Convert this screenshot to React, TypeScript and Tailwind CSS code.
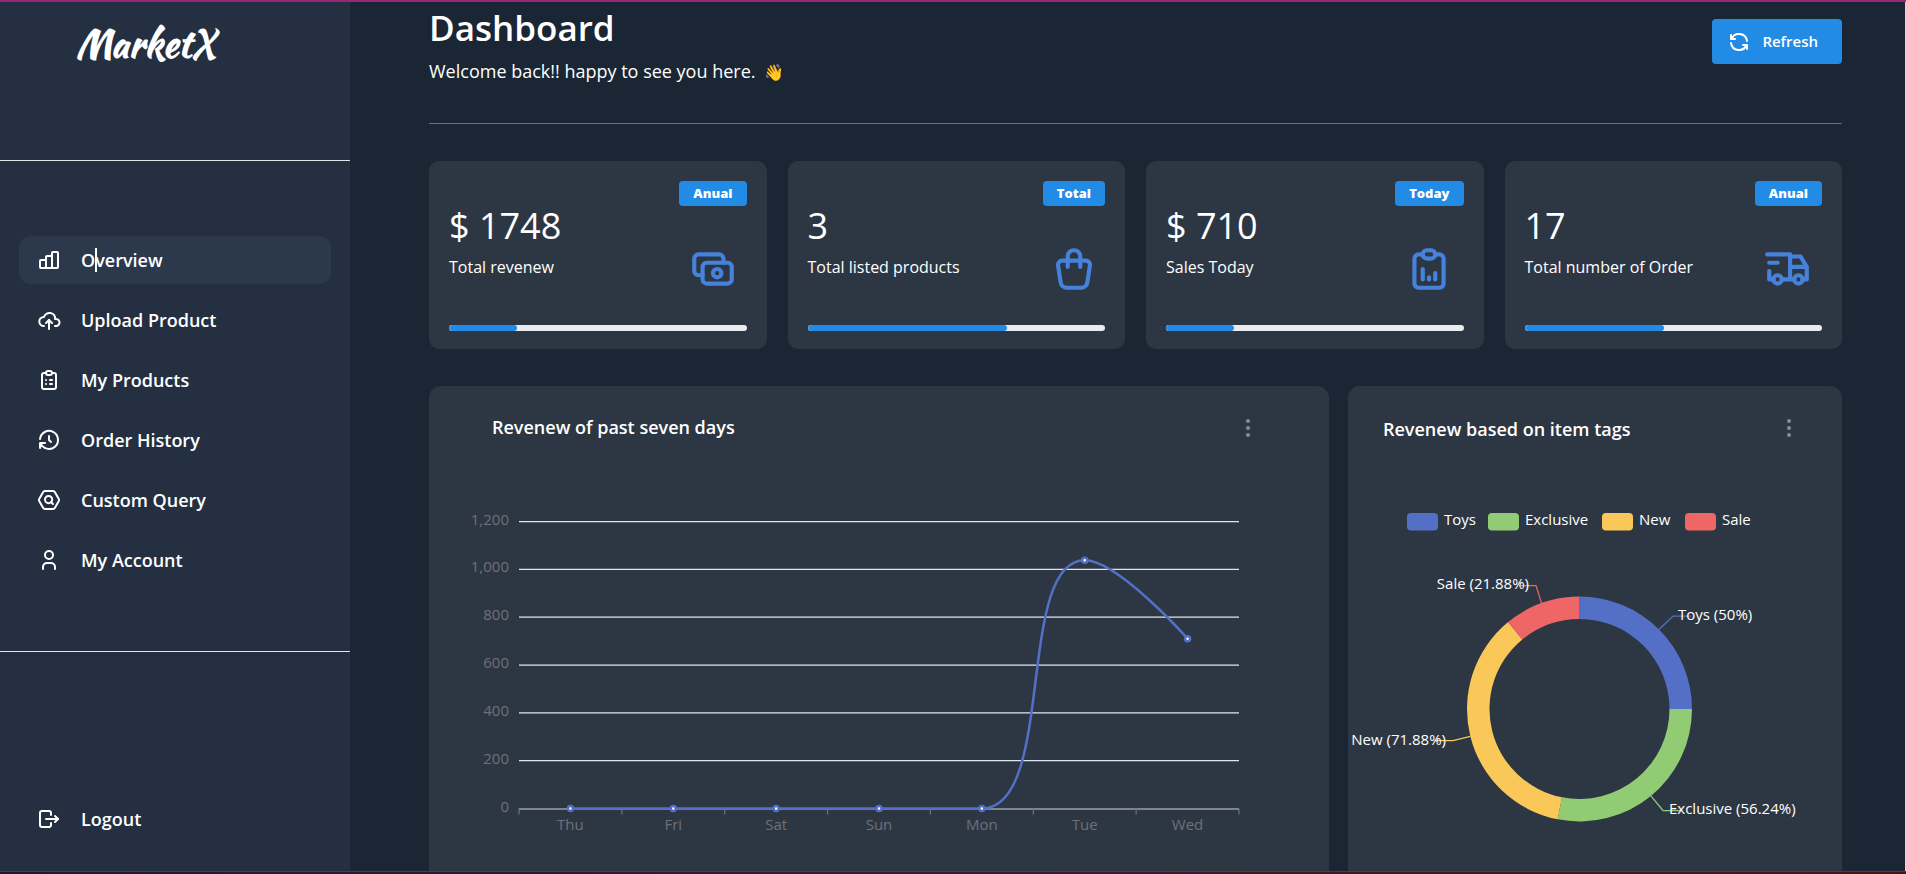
import type { ReactNode } from "react";
import type { IconType } from "react-icons";
import {
  TbCash,
  TbClipboardList,
  TbCloudUpload,
  TbDotsVertical,
  TbHistory,
  TbLogout,
  TbRefresh,
  TbReportAnalytics,
  TbShoppingBag,
  TbTruckDelivery,
  TbUser,
} from "react-icons/tb";

function BarsIcon({ size = 24 }: { size?: number | string }) {
  return (
    <svg width={size} height={size} viewBox="0 0 24 24" fill="none" stroke="currentColor" strokeWidth="2" strokeLinecap="round" strokeLinejoin="round">
      <rect x="3" y="12" width="6" height="8" rx="1" />
      <rect x="9" y="8" width="6" height="12" rx="1" />
      <rect x="15" y="4" width="6" height="16" rx="1" />
      <path d="M4 20h14" />
    </svg>
  );
}

function HexSearchIcon({ size = 24 }: { size?: number | string }) {
  return (
    <svg width={size} height={size} viewBox="0 0 24 24" fill="none" stroke="currentColor" strokeWidth="2" strokeLinecap="round" strokeLinejoin="round">
      <path d="M7.9 3h8.2a2 2 0 0 1 1.7 1l4 7a2 2 0 0 1 0 2l-4 7a2 2 0 0 1-1.7 1H7.9a2 2 0 0 1-1.7-1l-4-7a2 2 0 0 1 0-2l4-7a2 2 0 0 1 1.7-1z" />
      <circle cx="11.6" cy="11.6" r="3.6" />
      <path d="M14 14l2 2" />
    </svg>
  );
}

type NavEntry = { label: string; icon: IconType | typeof HexSearchIcon; active?: boolean };

const NAV: NavEntry[] = [
  { label: "Overview", icon: BarsIcon, active: true },
  { label: "Upload Product", icon: TbCloudUpload },
  { label: "My Products", icon: TbClipboardList },
  { label: "Order History", icon: TbHistory },
  { label: "Custom Query", icon: HexSearchIcon },
  { label: "My Account", icon: TbUser },
];

function NavLink({ entry }: { entry: NavEntry }) {
  const Icon = entry.icon;
  return (
    <a
      href="#"
      className={
        entry.active
          ? "flex h-12 items-center gap-5 rounded-xl bg-[#2c384b] px-[18px]"
          : "flex h-12 items-center gap-5 rounded-xl px-[18px]"
      }
    >
      <Icon size={24} />
      <span className="relative text-[18px] leading-6 font-semibold">
        {entry.label}
        {entry.active && <span className="absolute left-3.5 top-0 h-6 w-0.5 bg-white" />}
      </span>
    </a>
  );
}

function Sidebar() {
  return (
    <aside className="flex w-[350px] shrink-0 flex-col bg-[#242f42] text-white">
      <div className="h-[159px] border-b border-[#dfe3ea] px-[76px] pt-[17px]">
        <span className="font-['Kaushan_Script',cursive] text-[38px] leading-[50px] font-bold">MarketX</span>
      </div>
      <nav className="flex h-[491px] flex-col gap-3 border-b border-[#dfe3ea] px-[19px] pt-[75px]">
        {NAV.map((entry) => (
          <NavLink key={entry.label} entry={entry} />
        ))}
      </nav>
      <div className="mt-auto px-[19px] pb-7">
        <NavLink entry={{ label: "Logout", icon: TbLogout }} />
      </div>
    </aside>
  );
}

const STATS = [
  { value: "$ 1748", label: "Total revenew", badge: "Anual", icon: TbCash, percent: 23 },
  { value: "3", label: "Total listed products", badge: "Total", icon: TbShoppingBag, percent: 67 },
  { value: "$ 710", label: "Sales Today", badge: "Today", icon: TbReportAnalytics, percent: 23 },
  { value: "17", label: "Total number of Order", badge: "Anual", icon: TbTruckDelivery, percent: 47 },
];

function StatCard({ stat }: { stat: (typeof STATS)[number] }) {
  const Icon = stat.icon;
  return (
    <article className="flex h-[188px] flex-col rounded-[10px] bg-[#2d3743] p-5 pb-[18px]">
      <div className="flex justify-between">
        <div className="pt-[25px]">
          <p className="text-[36px] leading-10">{stat.value}</p>
          <p className="mt-[9px] text-[16px] leading-6">{stat.label}</p>
        </div>
        <div className="flex flex-col items-center">
          <span className="rounded bg-[#228be6] px-3.5 text-[13px] leading-[25px] font-extrabold">{stat.badge}</span>
          <Icon size={50} className="mt-[38px] text-[#4682dc]" />
        </div>
      </div>
      <div className="mt-auto h-1.5 overflow-hidden rounded-full bg-[#e9ecef]">
        <div className="h-full rounded-full bg-[#228be6]" style={{ width: `${stat.percent}%` }} />
      </div>
    </article>
  );
}

const DAYS = [
  { day: "Thu", total: 0 },
  { day: "Fri", total: 0 },
  { day: "Sat", total: 0 },
  { day: "Sun", total: 0 },
  { day: "Mon", total: 0 },
  { day: "Tue", total: 1038 },
  { day: "Wed", total: 710 },
];
const TICKS = [0, 200, 400, 600, 800, 1000, 1200];
const LEFT = 90;
const RIGHT = 810;
const BASE = 362.5;
const STEP = (RIGHT - LEFT) / DAYS.length;
const px = (i: number) => LEFT + STEP * (i + 0.5);
const py = (v: number) => BASE - (v / 200) * 47.83;

function LineChart() {
  return (
    <svg viewBox="0 0 900 440" className="block w-full" role="img" aria-label="Revenew of past seven days">
      {TICKS.map((t) => (
        <g key={t}>
          {t > 0 && <line x1={LEFT} x2={RIGHT} y1={py(t)} y2={py(t)} stroke="#e0e6f1" strokeWidth="1.25" />}
          <text x={LEFT - 10} y={py(t) + 3} textAnchor="end" fontSize="15" fill="#6e7079">
            {t.toLocaleString("en-US")}
          </text>
        </g>
      ))}
      <line x1={LEFT} x2={RIGHT} y1={BASE + 0.5} y2={BASE + 0.5} stroke="#80858c" strokeWidth="2" />
      {Array.from({ length: DAYS.length + 1 }, (_, i) => (
        <line key={i} x1={LEFT + STEP * i} x2={LEFT + STEP * i} y1={BASE} y2={BASE + 6} stroke="#6e7079" strokeWidth="1.25" />
      ))}
      <path
        d={`M${px(0)} ${BASE}H${px(4)}C${px(4) + 74.4} ${BASE} ${px(5) - 69.4} ${py(1038)} ${px(5)} ${py(1038)}C${px(5) + 33.4} ${py(1038)} ${px(6)} ${py(710)} ${px(6)} ${py(710)}`}
        fill="none"
        stroke="#5470c6"
        strokeWidth="2.5"
      />
      {DAYS.map((d, i) => (
        <g key={d.day}>
          <circle cx={px(i)} cy={py(d.total)} r="2.5" fill="#fff" stroke="#5470c6" strokeWidth="2.5" />
          <text x={px(i)} y={BASE + 21} textAnchor="middle" fontSize="15" fill="#6e7079">
            {d.day}
          </text>
        </g>
      ))}
    </svg>
  );
}

const CX = 231.5;
const CY = 263;
const R_OUT = 112.5;
const R_IN = 90;

function at(r: number, deg: number) {
  const a = (deg * Math.PI) / 180;
  return `${(CX + r * Math.sin(a)).toFixed(2)} ${(CY - r * Math.cos(a)).toFixed(2)}`;
}

function arc(from: number, to: number) {
  return `M${at(R_OUT, from)}A${R_OUT} ${R_OUT} 0 0 1 ${at(R_OUT, to)}L${at(R_IN, to)}A${R_IN} ${R_IN} 0 0 0 ${at(R_IN, from)}Z`;
}

const TAGS = [
  { name: "Toys", color: "#5470c6", from: 0, to: 90, legend: 59, label: "Toys (50%)", x: 330, y: 174, anchor: "start" as const, bend: "L325 170H343" },
  { name: "Exclusive", color: "#91cc75", from: 90, to: 191.2, legend: 140, label: "Exclusive (56.24%)", x: 321, y: 368, anchor: "start" as const, bend: "L315 364.5H333" },
  { name: "New", color: "#fac858", from: 191.2, to: 320.6, legend: 254, label: "New (71.88%)", x: 98, y: 299, anchor: "end" as const, bend: "L105 294.5H87" },
  { name: "Sale", color: "#ee6666", from: 320.6, to: 360, legend: 337, label: "Sale (21.88%)", x: 181, y: 143, anchor: "end" as const, bend: "L188 139.5H171" },
];

function DonutChart() {
  return (
    <svg viewBox="0 0 494 440" className="block w-full font-medium" role="img" aria-label="Revenew based on item tags">
      {TAGS.map((t) => (
        <g key={t.name}>
          <rect x={t.legend} y="67" width="31" height="17.5" rx="4" fill={t.color} />
          <text x={t.legend + 37} y="79" fontSize="15" fill="#fff">
            {t.name}
          </text>
          <path d={arc(t.from, t.to)} fill={t.color} />
          <path d={`M${at(R_OUT, (t.from + t.to) / 2)}${t.bend}`} fill="none" stroke={t.color} strokeWidth="1.25" />
          <text x={t.x} y={t.y} textAnchor={t.anchor} fontSize="15" fill="#fff">
            {t.label}
          </text>
        </g>
      ))}
    </svg>
  );
}

function ChartCard({ title, headerClass, children }: { title: string; headerClass: string; children: ReactNode }) {
  return (
    <section className="min-w-0 rounded-xl bg-[#2d3743]">
      <header className={headerClass}>
        <h2 className="text-[18px] font-semibold">{title}</h2>
        <button type="button" aria-label={`${title} menu`} className="text-[#868e96]">
          <TbDotsVertical size={24} />
        </button>
      </header>
      {children}
    </section>
  );
}

export default function App() {
  return (
    <div className="flex h-screen flex-col overflow-hidden bg-[#1b2533] font-['Segoe_UI','Open_Sans',sans-serif] text-white">
      <div className="h-0.5 shrink-0 bg-[#96287a]" />
      <div className="flex min-h-0 flex-1">
        <Sidebar />
        <main className="min-w-0 flex-1 overflow-hidden border-r border-[#d5d8dc] bg-[#1b2634] pr-[63px] pl-[79px]">
          <header className="flex h-[122px] items-start justify-between border-b border-[#666f7c]">
            <div className="pt-1">
              <h1 className="text-[35px] leading-11 font-semibold">Dashboard</h1>
              <p className="mt-[7px] text-[18px] leading-7">
                Welcome back!! happy to see you here. <span className="ml-1 text-[16px]">👋</span>
              </p>
            </div>
            <button type="button" className="mt-[17px] flex h-[45px] items-center gap-[11px] rounded bg-[#228be6] pr-6 pl-[15px] text-[15px] font-semibold">
              <TbRefresh size={24} />
              Refresh
            </button>
          </header>
          <div className="mt-[37px] grid grid-cols-4 gap-[21px]">
            {STATS.map((stat) => (
              <StatCard key={stat.label + stat.badge} stat={stat} />
            ))}
          </div>
          <div className="mt-[37px] grid grid-cols-[900fr_494fr] gap-[19px]">
            <ChartCard title="Revenew of past seven days" headerClass="flex h-[60px] items-start justify-between pt-[30px] pr-[69px] pl-[63px] leading-[22px]">
              <LineChart />
            </ChartCard>
            <ChartCard title="Revenew based on item tags" headerClass="flex h-[60px] items-start justify-between pt-[30px] pr-[41px] pl-[35px] leading-[26px]">
              <DonutChart />
            </ChartCard>
          </div>
        </main>
      </div>
      <div className="h-[3px] shrink-0 border-t border-[#4b3b4f] bg-linear-to-r from-[#24152f] via-[#3a1a30] to-[#4a1216]" />
    </div>
  );
}
